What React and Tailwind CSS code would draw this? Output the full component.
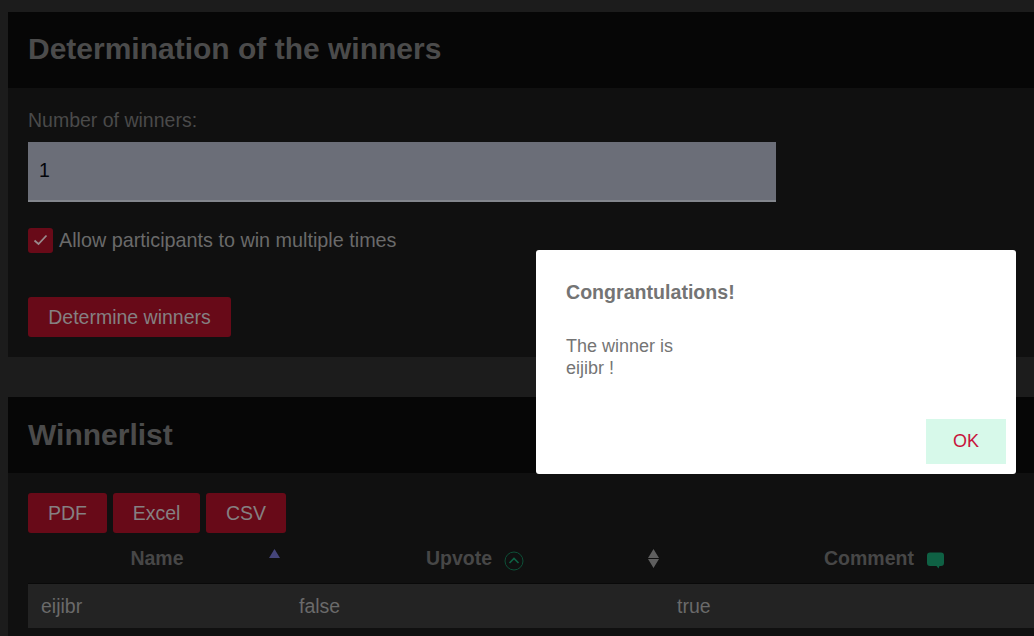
import React from "react";

function RedButton({ children, className = "" }) {
    return (
        <button className={`h-10 rounded-[3px] bg-[#680a18] pt-px text-[19.5px] text-[#858082] ${className}`}>
            {children}
        </button>
    );
}

function CardHeader({ children, className = "pb-[3px]" }) {
    return (
        <div className={`flex h-[76px] items-center bg-[#060606] px-5 ${className}`}>
            <h2 className="text-[30px] font-bold text-[#4b4b4b]">{children}</h2>
        </div>
    );
}

export default function App() {
    return (
        <div className="relative h-[636px] w-[1034px] overflow-hidden bg-[#1c1c1c] font-['Liberation_Sans',Arial,sans-serif]">
            <div className="w-[1100px] pl-2 pt-3">
                {/* Determination */}
                <section className="h-[345px] bg-[#101010]">
                    <CardHeader>Determination of the winners</CardHeader>
                    <div className="px-5 pt-[20px]">
                        <label className="block text-[19.5px] leading-[24px] text-[#4a4a4a]">Number of winners:</label>
                        <div className="mt-[10px] flex h-[60px] w-[748px] items-center border-b-2 border-[#83868d] bg-[#6b6e78] pl-[11px] text-[19.5px] text-[#03050a]">
                            1
                        </div>
                        <div className="mt-[25px] flex items-center gap-[6px]">
                            <span className="flex h-[25px] w-[25px] items-center justify-center rounded-[3px] bg-[#680a18]">
                                <svg width="15" height="12" viewBox="0 0 15 12" fill="none">
                                    <path d="M1.5 6.5 L5.5 10 L13.5 1.5" stroke="#99898c" strokeWidth="1.8" />
                                </svg>
                            </span>
                            <span className="text-[19.8px] leading-[26px] text-[#6a6a6a]">Allow participants to win multiple times</span>
                        </div>
                        <RedButton className="mt-[44px] w-[203px]">Determine winners</RedButton>
                    </div>
                </section>

                {/* Winnerlist */}
                <section className="mt-10 h-[300px] bg-[#101010]">
                    <CardHeader className="pb-[1px]">Winnerlist</CardHeader>
                    <div className="px-5 pt-5">
                        <div className="flex gap-[6px]">
                            <RedButton className="w-[79px]">PDF</RedButton>
                            <RedButton className="w-[87px]">Excel</RedButton>
                            <RedButton className="w-[80px]">CSV</RedButton>
                        </div>
                        <div className="grid h-[51px] grid-cols-[258px_378px_440px] items-center border-b border-[#090909] pt-[2px] text-[19.5px] font-bold text-[#474747]">
                            <div className="relative text-center">
                                Name
                                <svg className="absolute right-[6px] top-[5px]" width="11" height="9" viewBox="0 0 11 9">
                                    <path d="M5.5 0 L11 9 L0 9 Z" fill="#45457a" />
                                </svg>
                            </div>
                            <div className="relative flex items-center justify-center gap-3">
                                Upvote
                                <svg width="20" height="20" viewBox="0 0 20 20" fill="none" className="mt-[3px]">
                                    <circle cx="10" cy="10" r="9" stroke="#0d4f37" strokeWidth="1" />
                                    <path d="M5.5 12 L10 7.5 L14.5 12" stroke="#0f6144" strokeWidth="1.6" />
                                </svg>
                                <svg className="absolute right-[5px] top-[5px]" width="11" height="19" viewBox="0 0 11 19">
                                    <path d="M5.5 0 L11 9 L0 9 Z M0 10 L11 10 L5.5 19 Z" fill="#5f5f5f" />
                                </svg>
                            </div>
                            <div className="flex items-center justify-center gap-[13px]">
                                Comment
                                <svg width="17" height="17" viewBox="0 0 17 17" className="mt-[3px]">
                                    <path d="M3 0.5 H14 A3 3 0 0 1 17 3.5 V11 A3 3 0 0 1 14 14 H12.5 L11.5 16.5 L9.5 14 H3 A3 3 0 0 1 0 11 V3.5 A3 3 0 0 1 3 0.5 Z" fill="#0f6144" />
                                </svg>
                            </div>
                        </div>
                        <div className="grid h-[44px] grid-cols-[258px_378px_440px] items-center bg-[#232323] pt-[2px] text-[19.5px] text-[#6a6a6a]">
                            <div className="pl-[13px]">eijibr</div>
                            <div className="pl-[13px]">false</div>
                            <div className="pl-[13px]">true</div>
                        </div>
                    </div>
                </section>
            </div>

            {/* Dialog */}
            <div className="absolute left-[536px] top-[250px] flex h-[224px] w-[480px] flex-col rounded-[3px] bg-white">
                <div className="px-[30px] pt-[29px]">
                    <h3 className="text-[19.6px] font-bold leading-[26px] text-[#747474]">Congrantulations!</h3>
                    <p className="mt-[30px] text-[18px] leading-[22px] text-[#747474]">
                        The winner is
                        <br />
                        eijibr !
                    </p>
                </div>
                <div className="mt-auto flex justify-end pb-[10px] pr-[10px]">
                    <button className="h-[45px] w-20 bg-[#d7f9ea] text-[18px] text-[#c8143c]">OK</button>
                </div>
            </div>
        </div>
    );
}
